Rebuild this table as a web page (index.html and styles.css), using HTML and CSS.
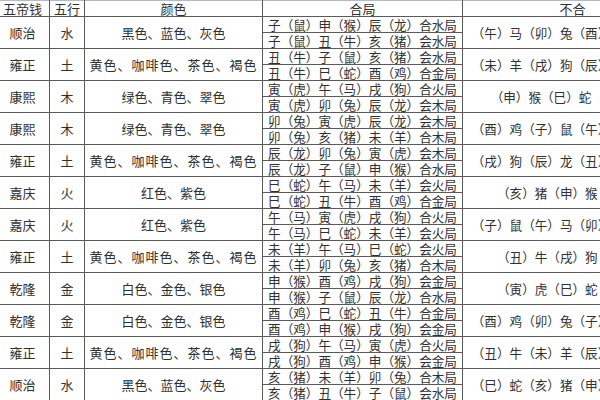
FILE: index.html
```html
<!DOCTYPE html>
<html lang="zh-CN">
<head>
<meta charset="utf-8">
<title>五帝钱</title>
<link rel="stylesheet" href="styles.css">
</head>
<body>
<table class="grid">
  <colgroup>
    <col class="c-coin">
    <col class="c-elem">
    <col class="c-color">
    <col class="c-he">
    <col class="c-bu">
  </colgroup>
  <thead>
    <tr><th>五帝钱</th><th>五行</th><th>颜色</th><th>合局</th><th>不合</th></tr>
  </thead>
  <tbody>
    <tr><td rowspan="2">顺治</td><td rowspan="2">水</td><td rowspan="2">黑色、蓝色、灰色</td><td class="he">子（鼠）申（猴）辰（龙）合水局</td><td rowspan="2" class="bu">（午）马（卯）兔（酉）鸡（未）羊</td></tr>
    <tr><td class="he">子（鼠）丑（牛）亥（猪）会水局</td></tr>

    <tr><td rowspan="2">雍正</td><td rowspan="2">土</td><td rowspan="2" class="wide">黄色、咖啡色、茶色、褐色</td><td class="he">丑（牛）子（鼠）亥（猪）会水局</td><td rowspan="2" class="bu">（未）羊（戌）狗（辰）龙（丑）牛</td></tr>
    <tr><td class="he">丑（牛）巳（蛇）酉（鸡）合金局</td></tr>

    <tr><td rowspan="2">康熙</td><td rowspan="2">木</td><td rowspan="2">绿色、青色、翠色</td><td class="he">寅（虎）午（马）戌（狗）合火局</td><td rowspan="2" class="bu">（申）猴（巳）蛇（寅）虎、</td></tr>
    <tr><td class="he">寅（虎）卯（兔）辰（龙）会木局</td></tr>

    <tr><td rowspan="2">康熙</td><td rowspan="2">木</td><td rowspan="2">绿色、青色、翠色</td><td class="he">卯（兔）寅（虎）辰（龙）会木局</td><td rowspan="2" class="bu">（酉）鸡（子）鼠（午）马（辰）龙</td></tr>
    <tr><td class="he">卯（兔）亥（猪）未（羊）合木局</td></tr>

    <tr><td rowspan="2">雍正</td><td rowspan="2">土</td><td rowspan="2" class="wide">黄色、咖啡色、茶色、褐色</td><td class="he">辰（龙）卯（兔）寅（虎）会木局</td><td rowspan="2" class="bu">（戌）狗（辰）龙（丑）牛（未）羊</td></tr>
    <tr><td class="he">辰（龙）子（鼠）申（猴）合水局</td></tr>

    <tr><td rowspan="2">嘉庆</td><td rowspan="2">火</td><td rowspan="2">红色、紫色</td><td class="he">巳（蛇）午（马）未（羊）会火局</td><td rowspan="2" class="bu">（亥）猪（申）猴（巳）蛇</td></tr>
    <tr><td class="he">巳（蛇）丑（牛）酉（鸡）合金局</td></tr>

    <tr><td rowspan="2">嘉庆</td><td rowspan="2">火</td><td rowspan="2">红色、紫色</td><td class="he">午（马）寅（虎）戌（狗）合火局</td><td rowspan="2" class="bu">（子）鼠（午）马（卯）兔（丑）牛</td></tr>
    <tr><td class="he">午（马）巳（蛇）未（羊）会火局</td></tr>

    <tr><td rowspan="2">雍正</td><td rowspan="2">土</td><td rowspan="2" class="wide">黄色、咖啡色、茶色、褐色</td><td class="he">未（羊）午（马）巳（蛇）会火局</td><td rowspan="2" class="bu">（丑）牛（戌）狗（未）羊</td></tr>
    <tr><td class="he">未（羊）卯（兔）亥（猪）合木局</td></tr>

    <tr><td rowspan="2">乾隆</td><td rowspan="2">金</td><td rowspan="2">白色、金色、银色</td><td class="he">申（猴）酉（鸡）戌（狗）会金局</td><td rowspan="2" class="bu">（寅）虎（巳）蛇（亥）猪</td></tr>
    <tr><td class="he">申（猴）子（鼠）辰（龙）合水局</td></tr>

    <tr><td rowspan="2">乾隆</td><td rowspan="2">金</td><td rowspan="2">白色、金色、银色</td><td class="he">酉（鸡）巳（蛇）丑（牛）合金局</td><td rowspan="2" class="bu">（酉）鸡（卯）兔（子）鼠（戌）狗</td></tr>
    <tr><td class="he">酉（鸡）申（猴）戌（狗）会金局</td></tr>

    <tr><td rowspan="2">雍正</td><td rowspan="2">土</td><td rowspan="2" class="wide">黄色、咖啡色、茶色、褐色</td><td class="he">戌（狗）午（马）寅（虎）合火局</td><td rowspan="2" class="bu">（丑）牛（未）羊（辰）龙（戌）狗</td></tr>
    <tr><td class="he">戌（狗）酉（鸡）申（猴）会金局</td></tr>

    <tr><td rowspan="2">顺治</td><td rowspan="2">水</td><td rowspan="2">黑色、蓝色、灰色</td><td class="he">亥（猪）未（羊）卯（兔）合木局</td><td rowspan="2" class="bu">（巳）蛇（亥）猪（申）猴（寅）虎</td></tr>
    <tr><td class="he">亥（猪）丑（牛）子（鼠）会水局</td></tr>
  </tbody>
</table>
</body>
</html>
```
FILE: styles.css
```css
html, body {
  margin: 0;
  padding: 0;
  background: #ffffff;
  width: 600px;
  height: 400px;
  overflow: hidden;
}

.grid {
  margin-left: -5px;
  width: 687px;
  table-layout: fixed;
  border-collapse: collapse;
  font-family: "Noto Sans CJK JP", "Noto Sans CJK SC", sans-serif;
  font-size: 13px;
  color: #303030;
}

.c-coin { width: 54px; }
.c-elem { width: 35px; }
.c-color { width: 178px; }
.c-he { width: 200px; }
.c-bu { width: 220px; }

.grid th,
.grid td {
  border: 1px solid #5a5a5a;
  padding: 0;
  height: 15px;
  line-height: 15px;
  text-align: center;
  vertical-align: middle;
  white-space: nowrap;
  overflow: hidden;
  font-weight: 400;
}

.grid thead th {
  border-top-color: #b4bac4;
}

.grid .he {
  font-size: 12.6px;
}

.grid .bu {
  font-size: 12.6px;
}

.grid .wide {
  letter-spacing: 1px;
}
```
